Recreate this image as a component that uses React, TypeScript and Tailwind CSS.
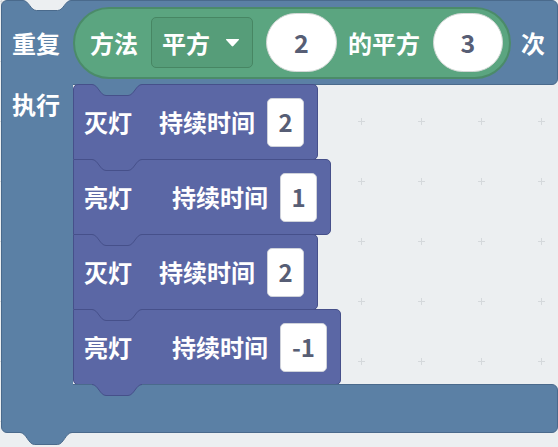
import React from 'react';

const BLUE = '#5b80a5';
const BLUE_B = '#4a6a8c';
const PURPLE = '#5b67a5';
const PURPLE_B = '#46508a';

function Notch({ fill, stroke, w, d, className }: { fill: string; stroke: string; w: number; d: number; className: string }) {
  const y1 = d + 0.5;
  const curve = `M0 0.5 C${w * 0.12} 0.5 ${w * 0.16} ${y1} ${w * 0.28} ${y1} L${w * 0.72} ${y1} C${w * 0.84} ${y1} ${w * 0.88} 0.5 ${w} 0.5`;
  return (
    <svg width={w} height={d + 1} viewBox={`0 0 ${w} ${d + 1}`} className={`absolute overflow-visible ${className}`}>
      <path d={`${curve} L${w} 0 L0 0 Z`} fill={fill} />
      <path d={curve} fill="none" stroke={stroke} strokeWidth={1} />
    </svg>
  );
}

function Grid() {
  const xs = [1, 61, 121, 181, 241, 301, 361, 421, 481, 541];
  const ys = [1, 61, 121, 181, 241, 301, 361, 421];
  let d = '';
  for (const x of xs) for (const y of ys) {
    d += `M${x - 3} ${y + 0.5}H${x + 4}M${x + 0.5} ${y - 3}V${y + 4}`;
  }
  return (
    <svg width={558} height={447} className="absolute left-0 top-0">
      <path d={d} stroke="#d5d9dc" strokeWidth={1} fill="none" />
    </svg>
  );
}

function Block({
  label, gapClass, value, widthClass, boxClass, first, last,
}: { label: string; gapClass: string; value: string; widthClass: string; boxClass: string; first?: boolean; last?: boolean }) {
  return (
    <div
      className={`relative flex h-[76px] items-center rounded-r-[5px] border border-[#46508a] bg-[#5b67a5] pl-[10px] ${widthClass} ${first ? 'rounded-tl-[5px]' : '-mt-px'} ${last ? 'rounded-bl-[5px]' : ''}`}
    >
      <Notch fill={first ? BLUE : PURPLE} stroke={PURPLE_B} w={50} d={11} className="-top-px left-[18px]" />
      <span className="text-[24px] font-bold leading-none text-white">{label}</span>
      <span className={`text-[24px] font-bold leading-none text-white ${gapClass}`}>持续时间</span>
      <div className={`ml-[12px] flex h-[49px] items-center justify-center rounded-[5px] border border-[#cfd2da] bg-white text-[24px] font-bold text-[#575e75] ${boxClass}`}>
        {value}
      </div>
      {last && <Notch fill={PURPLE} stroke={PURPLE_B} w={50} d={11} className="top-full left-[18px] z-20" />}
    </div>
  );
}

export default function App() {
  return (
    <div className="relative h-[447px] w-[558px] overflow-hidden bg-[#eceff1] font-['Noto_Sans_CJK_SC','Noto_Sans',sans-serif]">
      <Grid />
      <div className="relative ml-px flex w-[557px] flex-col">
        {/* top arm */}
        <div className="relative flex h-[85px] items-center rounded-t-[6px] rounded-br-[6px] border border-[#4a6a8c] bg-[#5b80a5]">
          <Notch fill="#eceff1" stroke={BLUE_B} w={48} d={10} className="-top-px left-[21px]" />
          <span className="ml-[10px] text-[24px] font-bold leading-none text-white">重复</span>
          <div className="ml-[13px] flex h-[72px] items-center rounded-full border-2 border-[#4b8b69] bg-[#5ba580] pl-[15px] pr-[6px]">
            <span className="text-[24px] font-bold leading-none text-white">方法</span>
            <div className="ml-[13px] flex h-[51px] w-[102px] items-center rounded-[5px] border border-[#478663] bg-[#569d79] pl-[10px]">
              <span className="text-[24px] font-bold leading-none text-white">平方</span>
              <svg width={15} height={9} viewBox="0 0 15 9" className="ml-[15px]">
                <path d="M1.5 1 H13.5 Q14.5 1 13.8 2 L8.3 8 Q7.5 8.8 6.7 8 L1.2 2 Q0.5 1 1.5 1 Z" fill="#ffffff" />
              </svg>
            </div>
            <div className="ml-[13px] flex h-[59px] w-[71px] items-center justify-center rounded-full border border-[#d4d8d6] bg-white text-[25px] font-bold text-[#575e75]">
              2
            </div>
            <span className="ml-[11px] text-[24px] font-bold leading-none text-white">的平方</span>
            <div className="ml-[13px] flex h-[59px] w-[70px] items-center justify-center rounded-full border border-[#d4d8d6] bg-white text-[25px] font-bold text-[#575e75]">
              3
            </div>
          </div>
          <span className="ml-[10px] text-[24px] font-bold leading-none text-white">次</span>
        </div>
        {/* middle */}
        <div className="flex">
          <div className="relative z-10 -my-px w-[72px] border-l border-[#4a6a8c] bg-[#5b80a5] pl-[10px] pt-[4px]">
            <span className="text-[24px] font-bold leading-[32px] text-white">执行</span>
          </div>
          <div className="-mt-px flex flex-col items-start">
            <Block label="灭灯" gapClass="ml-[27px]" value="2" widthClass="w-[245px]" boxClass="w-[37px]" first />
            <Block label="亮灯" gapClass="ml-[40px]" value="1" widthClass="w-[258px]" boxClass="w-[37px]" />
            <Block label="灭灯" gapClass="ml-[27px]" value="2" widthClass="w-[245px]" boxClass="w-[37px]" />
            <Block label="亮灯" gapClass="ml-[40px]" value="-1" widthClass="w-[268px]" boxClass="w-[47px]" last />
          </div>
        </div>
        {/* bottom arm */}
        <div className="relative -mt-px h-[49px] rounded-b-[6px] rounded-tr-[6px] border border-[#4a6a8c] bg-[#5b80a5]">
          <Notch fill={BLUE} stroke={BLUE_B} w={52} d={12} className="top-full left-[18px]" />
        </div>
      </div>
    </div>
  );
}
